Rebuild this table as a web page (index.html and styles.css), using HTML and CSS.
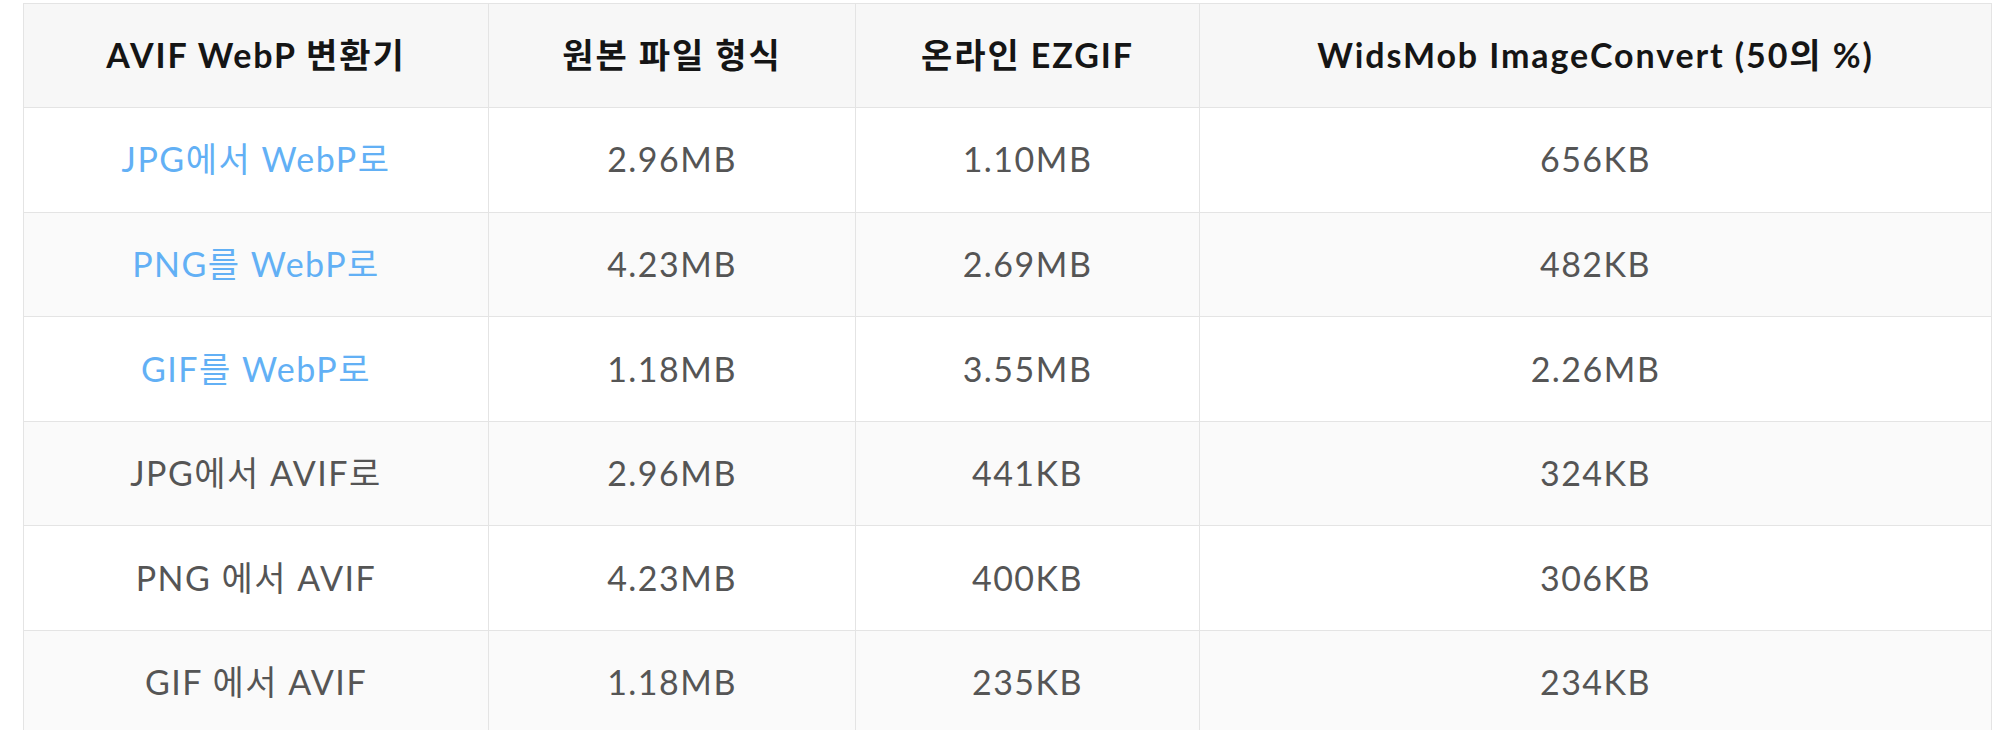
FILE: index.html
```html
<!DOCTYPE html>
<html lang="ko">
<head>
<meta charset="utf-8">
<title>AVIF WebP 변환기 비교</title>
<link rel="stylesheet" href="styles.css">
</head>
<body>
<div class="wrap">
<table class="cmp">
  <colgroup>
    <col class="c1"><col class="c2"><col class="c3"><col class="c4">
  </colgroup>
  <thead>
    <tr>
      <th>AVIF WebP 변환기</th>
      <th>원본 파일 형식</th>
      <th>온라인 EZGIF</th>
      <th>WidsMob ImageConvert (50의 %)</th>
    </tr>
  </thead>
  <tbody>
    <tr><td><a class="lnk" href="#">JPG에서 WebP로</a></td><td>2.96MB</td><td>1.10MB</td><td>656KB</td></tr>
    <tr><td><a class="lnk" href="#">PNG를 WebP로</a></td><td>4.23MB</td><td>2.69MB</td><td>482KB</td></tr>
    <tr><td><a class="lnk" href="#">GIF를 WebP로</a></td><td>1.18MB</td><td>3.55MB</td><td>2.26MB</td></tr>
    <tr><td>JPG에서 AVIF로</td><td>2.96MB</td><td>441KB</td><td>324KB</td></tr>
    <tr><td>PNG 에서 AVIF</td><td>4.23MB</td><td>400KB</td><td>306KB</td></tr>
    <tr><td>GIF 에서 AVIF</td><td>1.18MB</td><td>235KB</td><td>234KB</td></tr>
  </tbody>
</table>
</div>
</body>
</html>
```
FILE: styles.css
```css
html, body {
  margin: 0;
  padding: 0;
  background: #ffffff;
}
.wrap {
  padding: 3px 0 0 23px;
}
.cmp {
  width: 1969px;
  border-collapse: collapse;
  table-layout: fixed;
  font-family: "Lato", "Noto Sans CJK KR", sans-serif;
  font-size: 34px;
  color: #555555;
  letter-spacing: 1.5px;
}
.c1 { width: 465px; }
.c2 { width: 367px; }
.c3 { width: 344px; }
.c4 { width: auto; }
.cmp th, .cmp td {
  border: 1px solid #e4e4e4;
  text-align: center;
  vertical-align: middle;
  padding: 0 10px;
  line-height: 1.2;
}
.cmp th {
  height: 103px;
  background: #f7f7f7;
  color: #151515;
  font-weight: 700;
  letter-spacing: 1.9px;
}
.cmp td {
  height: 103.6px;
}
.cmp tbody tr:nth-child(odd) td { background: #ffffff; }
.cmp tbody tr:nth-child(even) td { background: #fafafa; }
.lnk {
  color: #62b0f5;
  text-decoration: none;
}
```
